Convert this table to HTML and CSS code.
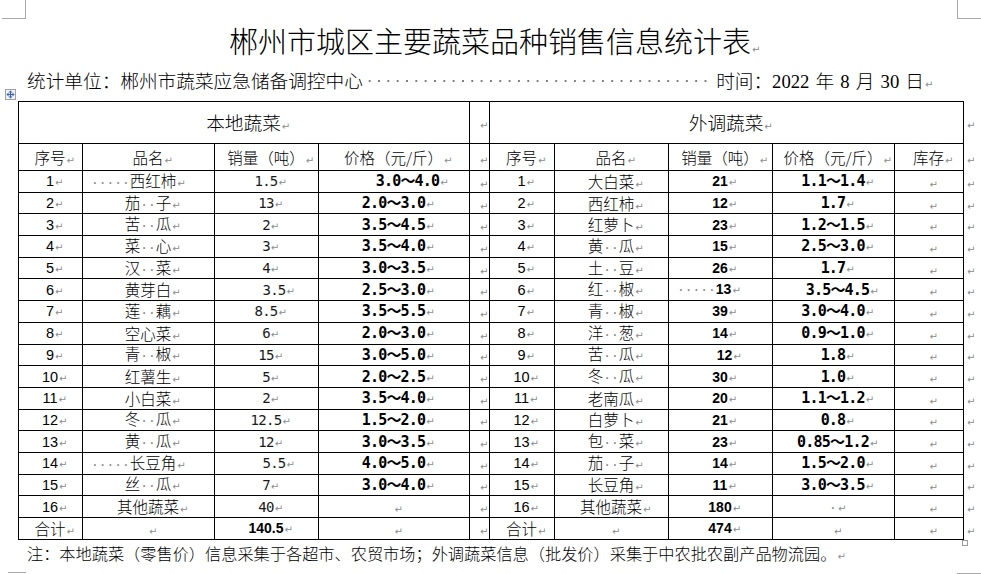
FILE: index.html
```html
<!DOCTYPE html>
<html lang="zh-CN">
<head>
<meta charset="utf-8">
<title>郴州市城区主要蔬菜品种销售信息统计表</title>
<link rel="stylesheet" href="styles.css">
</head>
<body>
<div class="page">
  <span class="crop c1"></span><span class="crop c2"></span>
  <span class="crop c3"></span><span class="crop c4"></span>
  <span class="crop c5"></span><span class="crop c6"></span>

  <h1 class="title">郴州市城区主要蔬菜品种销售信息统计表<span class="pm">↵</span></h1>

  <div class="meta">
    <span class="unit">统计单位：郴州市蔬菜应急储备调控中心</span>
    <span class="leader"></span>
    <span class="date">时间：<span class="lat">2022</span> 年 <span class="lat">8</span> 月 <span class="lat">30</span> 日<span class="pm">↵</span></span>
  </div>

  <div class="tablewrap">
    <span class="handle"><svg width="11" height="11" viewBox="0 0 11 11"><rect x="0.5" y="0.5" width="10" height="10" fill="#f3f3f3" stroke="#a0a0a0"/><path d="M5.5 2.5v6M2.5 5.5h6" stroke="#2f62c8" stroke-width="1"/><path d="M5.5 1.5l-2 2h4zM5.5 9.5l-2-2h4zM1.5 5.5l2-2v4zM9.5 5.5l-2-2v4z" fill="#2f62c8"/></svg></span>
    <table class="sheet">
      <colgroup>
        <col class="w64"><col class="w132"><col class="w104"><col class="w151"><col class="w20">
        <col class="w65"><col class="w114"><col class="w104"><col class="w122"><col class="w69"><col class="w18">
      </colgroup>
      <tr class="r1">
        <td colspan="4" class="hd">本地蔬菜</td><td></td><td colspan="5" class="hd">外调蔬菜</td><td class="eor"></td>
      </tr>
      <tr class="r2">
        <td>序号</td><td>品名</td><td>销量（吨）</td><td>价格（元/斤）</td><td></td>
        <td>序号</td><td>品名</td><td>销量（吨）</td><td>价格（元/斤）</td><td>库存</td><td class="eor"></td>
      </tr>
      <tr class="d">
        <td class="n">1</td><td class="l"><span class="sp">·····</span>西红柿</td><td class="m">1.5</td><td class="p pl">3.0～4.0</td><td></td>
        <td class="n">1</td><td>大白菜</td><td class="b">21</td><td class="p">1.1～1.4</td><td></td><td class="eor"></td>
      </tr>
      <tr class="d">
        <td class="n">2</td><td>茄<span class="sp">··</span>子</td><td class="m">13</td><td class="p">2.0～3.0</td><td></td>
        <td class="n">2</td><td>西红柿</td><td class="b">12</td><td class="p">1.7</td><td></td><td class="eor"></td>
      </tr>
      <tr class="d">
        <td class="n">3</td><td>苦<span class="sp">··</span>瓜</td><td class="m">2</td><td class="p">3.5～4.5</td><td></td>
        <td class="n">3</td><td>红萝卜</td><td class="b">23</td><td class="p">1.2～1.5</td><td></td><td class="eor"></td>
      </tr>
      <tr class="d">
        <td class="n">4</td><td>菜<span class="sp">··</span>心</td><td class="m">3</td><td class="p">3.5～4.0</td><td></td>
        <td class="n">4</td><td>黄<span class="sp">··</span>瓜</td><td class="b">15</td><td class="p">2.5～3.0</td><td></td><td class="eor"></td>
      </tr>
      <tr class="d">
        <td class="n">5</td><td>汉<span class="sp">··</span>菜</td><td class="m">4</td><td class="p">3.0～3.5</td><td></td>
        <td class="n">5</td><td>土<span class="sp">··</span>豆</td><td class="b">26</td><td class="p">1.7</td><td></td><td class="eor"></td>
      </tr>
      <tr class="d">
        <td class="n">6</td><td>黄芽白</td><td class="m sh">3.5</td><td class="p">2.5～3.0</td><td></td>
        <td class="n">6</td><td>红<span class="sp">··</span>椒</td><td class="b l"><span class="sp">·····</span>13</td><td class="p sr">3.5～4.5</td><td></td><td class="eor"></td>
      </tr>
      <tr class="d">
        <td class="n">7</td><td>莲<span class="sp">··</span>藕</td><td class="m">8.5</td><td class="p">3.5～5.5</td><td></td>
        <td class="n">7</td><td>青<span class="sp">··</span>椒</td><td class="b">39</td><td class="p">3.0～4.0</td><td></td><td class="eor"></td>
      </tr>
      <tr class="d">
        <td class="n">8</td><td>空心菜</td><td class="m">6</td><td class="p">2.0～3.0</td><td></td>
        <td class="n">8</td><td>洋<span class="sp">··</span>葱</td><td class="b">14</td><td class="p">0.9～1.0</td><td></td><td class="eor"></td>
      </tr>
      <tr class="d">
        <td class="n">9</td><td>青<span class="sp">··</span>椒</td><td class="m">15</td><td class="p">3.0～5.0</td><td></td>
        <td class="n">9</td><td>苦<span class="sp">··</span>瓜</td><td class="b sr">12</td><td class="p">1.8</td><td></td><td class="eor"></td>
      </tr>
      <tr class="d">
        <td class="n">10</td><td>红薯生</td><td class="m">5</td><td class="p">2.0～2.5</td><td></td>
        <td class="n">10</td><td>冬<span class="sp">··</span>瓜</td><td class="b">30</td><td class="p">1.0</td><td></td><td class="eor"></td>
      </tr>
      <tr class="d">
        <td class="n">11</td><td>小白菜</td><td class="m">2</td><td class="p">3.5～4.0</td><td></td>
        <td class="n">11</td><td>老南瓜</td><td class="b">20</td><td class="p">1.1～1.2</td><td></td><td class="eor"></td>
      </tr>
      <tr class="d">
        <td class="n">12</td><td>冬<span class="sp">··</span>瓜</td><td class="m">12.5</td><td class="p">1.5～2.0</td><td></td>
        <td class="n">12</td><td>白萝卜</td><td class="b">21</td><td class="p">0.8</td><td></td><td class="eor"></td>
      </tr>
      <tr class="d">
        <td class="n">13</td><td>黄<span class="sp">··</span>瓜</td><td class="m">12</td><td class="p">3.0～3.5</td><td></td>
        <td class="n">13</td><td>包<span class="sp">··</span>菜</td><td class="b">23</td><td class="p">0.85～1.2</td><td></td><td class="eor"></td>
      </tr>
      <tr class="d">
        <td class="n">14</td><td class="l"><span class="sp">·····</span>长豆角</td><td class="m sh">5.5</td><td class="p">4.0～5.0</td><td></td>
        <td class="n">14</td><td>茄<span class="sp">··</span>子</td><td class="b">14</td><td class="p">1.5～2.0</td><td></td><td class="eor"></td>
      </tr>
      <tr class="d">
        <td class="n">15</td><td>丝<span class="sp">··</span>瓜</td><td class="m">7</td><td class="p">3.0～4.0</td><td></td>
        <td class="n">15</td><td>长豆角</td><td class="b">11</td><td class="p">3.0～3.5</td><td></td><td class="eor"></td>
      </tr>
      <tr class="d">
        <td class="n">16</td><td>其他蔬菜</td><td class="m">40</td><td></td><td></td>
        <td class="n">16</td><td>其他蔬菜</td><td class="b">180</td><td><span class="sp">·</span></td><td></td><td class="eor"></td>
      </tr>
      <tr class="d">
        <td>合计</td><td></td><td class="b">140.5</td><td></td><td></td>
        <td>合计</td><td></td><td class="b">474</td><td></td><td></td><td class="eor"></td>
      </tr>
    </table>
    <span class="endbox"></span>
  </div>

  <p class="note">注：本地蔬菜（零售价）信息采集于各超市、农贸市场；外调蔬菜信息（批发价）采集于中农批农副产品物流园。<span class="pm">↵</span></p>
</div>
</body>
</html>
```

FILE: styles.css
```css
* { box-sizing: border-box; }
html, body { margin: 0; padding: 0; background: #fff; }
body {
  font-family: "Noto Sans CJK SC", "Noto Sans", sans-serif;
  font-weight: 300;
  color: #000;
}
.page {
  position: relative;
  width: 981px;
  height: 574px;
  overflow: hidden;
  padding-top: 23px;
}

/* page corner marks */
.crop { position: absolute; background: #a8a8a8; }
.c1 { left: 25px; top: 0; width: 1px; height: 19px; }
.c2 { left: 2px; top: 18px; width: 24px; height: 1px; }
.c3 { left: 957px; top: 0; width: 1px; height: 19px; }
.c4 { left: 957px; top: 18px; width: 24px; height: 1px; }
.c5 { left: 8px; top: 572px; width: 18px; height: 1px; }
.c6 { left: 957px; top: 573px; width: 24px; height: 1px; }

/* paragraph marks */
.pm {
  display: inline-block;
  width: 0;
  white-space: nowrap;
  font-family: "DejaVu Sans", sans-serif;
  font-size: 10px;
  line-height: 10px;
  font-weight: 400;
  color: #8c8c8c;
  padding-left: 1px;
}

.title {
  margin: 0;
  font-size: 29px;
  font-weight: 300;
  line-height: 34px;
  height: 34px;
  text-align: center;
}

.meta {
  display: flex;
  margin: 12px 0 0 27px;
  width: 898px;
  height: 22px;
  font-size: 18.67px;
  line-height: 22px;
  white-space: nowrap;
}
.leader {
  flex: 1;
  margin: 0 3px 0 2px;
  background-image: radial-gradient(circle, #7c7c7c 0.9px, transparent 1.2px);
  background-size: 9.33px 4px;
  background-position: 0 10px;
  background-repeat: repeat-x;
}
.lat { font-family: "Liberation Serif", serif; font-weight: 400; }
.date { word-spacing: 2px; }

.tablewrap {
  position: relative;
  margin: 10px 0 0 18px;
  width: 963px;
}
.handle {
  position: absolute;
  left: -13px;
  top: -12px;
  width: 11px;
  height: 11px;
  line-height: 0;
}
.endbox {
  position: absolute;
  left: 944px;
  top: 439px;
  width: 6px;
  height: 6px;
  border: 1px solid #9a9a9a;
}

.sheet {
  border-collapse: collapse;
  table-layout: fixed;
  width: 963px;
}
.w64 { width: 64px; }
.w132 { width: 132px; }
.w104 { width: 104px; }
.w151 { width: 151px; }
.w20 { width: 20px; }
.w65 { width: 65px; }
.w114 { width: 114px; }
.w122 { width: 122px; }
.w69 { width: 69px; }
.w18 { width: 18px; }

.sheet td {
  border: 1px solid #000;
  padding: 0;
  text-align: center;
  vertical-align: middle;
  font-size: 15.5px;
  line-height: 16px;
  white-space: nowrap;
  overflow: visible;
}
.sheet td::after {
  content: "\21B5";
  display: inline-block;
  width: 9px;
  margin-right: -9px;
  font-family: "DejaVu Sans", sans-serif;
  font-size: 10px;
  line-height: 10px;
  font-weight: 400;
  letter-spacing: 0;
  color: #8c8c8c;
  text-align: left;
  padding-left: 1px;
}
.sheet td.eor { border: none; text-align: left; padding-left: 2px; }

.r1 { height: 42px; }
.r2 { height: 27px; }
.d { height: 21.7px; }

.sheet td.hd { font-size: 18.67px; }

.sheet td.n {
  font-family: "Liberation Sans", sans-serif;
  font-size: 14.5px;
  font-weight: 400;
}
.sheet td.m {
  font-family: "DejaVu Sans Mono", monospace;
  font-size: 14px;
  font-weight: 400;
  letter-spacing: -0.7px;
  color: #1a1a1a;
}
.sheet td.p {
  font-family: "DejaVu Sans Mono", "Noto Sans CJK SC", monospace;
  font-size: 15px;
  font-weight: 700;
  letter-spacing: -0.8px;
}
.sheet td.b { font-family: "Liberation Sans", sans-serif; font-size: 14px; font-weight: 700; }
.sheet td.l { text-align: left; padding-left: 8px; }
.pl { padding-left: 28px !important; }
.sh { padding-left: 16px !important; }
.sr { padding-left: 9px !important; }

.sp {
  font-family: "DejaVu Sans Mono", monospace;
  font-size: 12.9px;
  font-weight: 400;
  letter-spacing: 0;
  color: #8a8a8a;
}

.note {
  margin: 2px 0 0 27px;
  font-size: 16.2px;
  line-height: 22px;
  white-space: nowrap;
}
```
